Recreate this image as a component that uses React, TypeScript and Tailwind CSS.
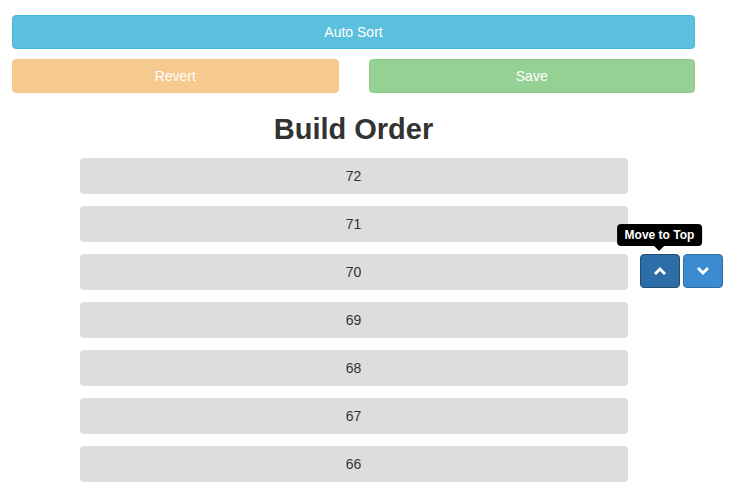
import React from "react";

const items = [72, 71, 70, 69, 68, 67, 66];

function Chevron({ up }: { up?: boolean }) {
  return (
    <svg width="12" height="10" viewBox="0 0 12 10">
      <polyline
        points={up ? "2,7 6,3 10,7" : "2,3 6,7 10,3"}
        fill="none"
        stroke="white"
        strokeWidth="3"
        strokeLinecap="square"
      />
    </svg>
  );
}

export default function App() {
  return (
    <div
      className="w-[739px] h-[491px] overflow-hidden bg-white text-[14px] text-[#333]"
      style={{ fontFamily: '"Liberation Sans", Arial, sans-serif' }}
    >
      <div className="w-[683px] ml-[12px] pt-[15px]">
        {/* Top actions */}
        <button className="w-full h-[34px] rounded-[4px] border border-[#46b8da] bg-[#5bc0de] text-white">
          Auto Sort
        </button>
        <div className="grid grid-cols-2 gap-[30px] mt-[10px]">
          <button className="h-[34px] rounded-[4px] border border-[#f4c68a] bg-[#f6ca8e] text-white">
            Revert
          </button>
          <button className="h-[34px] rounded-[4px] border border-[#8ccb8c] bg-[#95d195] text-white">
            Save
          </button>
        </div>

        <h1 className="text-center font-bold text-[29px] leading-[32px] mt-[20px] mb-[13px] text-[#333]">
          Build Order
        </h1>

        {/* List */}
        <div className="w-[548px] mx-auto flex flex-col gap-[12px]">
          {items.map((n) => (
            <div key={n} className="relative">
              <div className="h-[36px] rounded-[4px] bg-[#dddddd] flex items-center justify-center">
                {n}
              </div>
              {n === 70 && (
                <div className="absolute left-[560px] top-0 flex gap-[3px]">
                  <div className="relative">
                    <button className="w-[40px] h-[34px] rounded-[4px] border border-[#204d74] bg-[#2d6da8] flex items-center justify-center">
                      <Chevron up />
                    </button>
                    <div className="absolute left-1/2 -translate-x-1/2 -top-[30px] whitespace-nowrap">
                      <div className="bg-black rounded-[4px] px-[8px] h-[22px] flex items-center text-white text-[12px] font-bold">
                        Move to Top
                      </div>
                      <div className="mx-auto w-0 h-0 border-l-[5px] border-r-[5px] border-t-[5px] border-l-transparent border-r-transparent border-t-black" />
                    </div>
                  </div>
                  <button className="w-[40px] h-[34px] rounded-[4px] border border-[#2e6da4] bg-[#3c8ad0] flex items-center justify-center">
                    <Chevron />
                  </button>
                </div>
              )}
            </div>
          ))}
        </div>
      </div>
    </div>
  );
}
